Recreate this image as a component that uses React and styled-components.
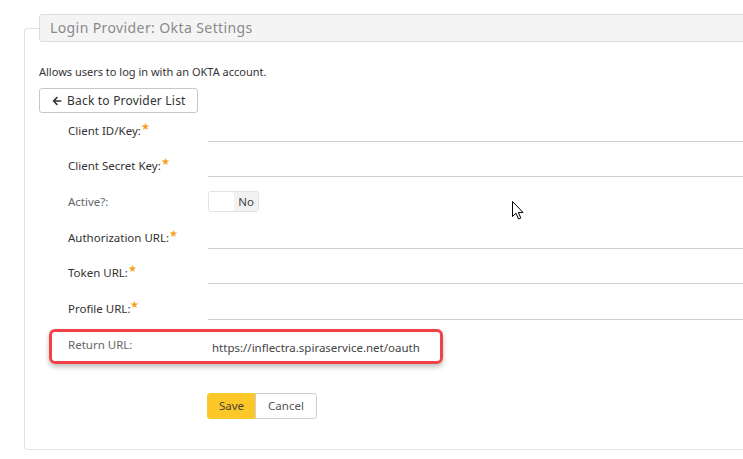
import React from "react";
import styled, { createGlobalStyle } from "styled-components";
import { FaArrowLeft } from "react-icons/fa";

const Global = createGlobalStyle`
  html, body { margin: 0; padding: 0; background: #fff; overflow: hidden; }
  body { font-family: "Noto Sans", "Open Sans", sans-serif; color: #333; }
`;

const Page = styled.div`
  width: 743px;
  height: 459px;
  position: relative;
  overflow: hidden;
  padding: 14px 0 0 24px;
  box-sizing: border-box;
`;

const Fieldset = styled.fieldset`
  width: 760px;
  margin: 0;
  padding: 0 0 30px 14px;
  border: 1px solid #e2e2e2;
  border-radius: 3px;
  box-sizing: border-box;
  min-width: 0;
`;

const Legend = styled.legend`
  width: 720px;
  height: 28px;
  box-sizing: border-box;
  padding: 0 0 0 10px;
  background: #f4f4f4;
  border: 1px solid #dcdcdc;
  border-radius: 3px;
  color: #8a8a8a;
  font-size: 14px;
  line-height: 26px;
  letter-spacing: 0.4px;
`;

const Description = styled.p`
  margin: 22px 0 8px;
  font-size: 11px;
  line-height: 16px;
  color: #333;
`;

const OutlineButton = styled.button`
  display: flex;
  width: max-content;
  align-items: center;
  gap: 5px;
  height: 25px;
  padding: 0 11px 0 12px;
  background: #fff;
  border: 1px solid #c8c8c8;
  border-radius: 3px;
  font-family: inherit;
  font-size: 12px;
  letter-spacing: 0.2px;
  color: #333;
`;

const Form = styled.div`
  display: flex;
  flex-direction: column;
  padding-left: 29px;
  margin-top: -0.5px;
`;

const Row = styled.div`
  position: relative;
  display: grid;
  grid-template-columns: 140px 1fr;
  align-items: center;
  height: 35.6px;
`;

const ReturnRow = styled(Row)`
  margin-top: 1px;
`;

const Label = styled.label`
  font-size: 11.5px;
  color: ${(p) => (p.$required ? "#333" : "#666")};
`;

const Star = styled.sup`
  color: #f5a11c;
  font-size: 10px;
  line-height: 0;
`;

const Input = styled.input`
  height: 22px;
  border: none;
  border-bottom: 1px solid #cfcfcf;
  background: transparent;
  outline: none;
  padding: 0;
`;

const Toggle = styled.div`
  display: flex;
  width: 51px;
  height: 21px;
  box-sizing: border-box;
  border: 1px solid #e2e2e2;
  border-radius: 3px;
  overflow: hidden;
  font-size: 11.5px;
  color: #444;
`;

const ToggleKnob = styled.span`
  width: 25px;
  background: #fff;
`;

const ToggleText = styled.span`
  flex: 1;
  display: flex;
  align-items: center;
  justify-content: center;
  background: #f2f2f2;
`;

const Value = styled.span`
  font-size: 11.5px;
  color: #444;
  padding: 5px 0 0 4px;
`;

const Highlight = styled.span`
  position: absolute;
  left: -19px;
  top: 1.5px;
  width: 394px;
  height: 35px;
  box-sizing: border-box;
  border: 3px solid #f04247;
  border-radius: 6px;
  box-shadow: 0 3px 5px rgba(0, 0, 0, 0.25);
  pointer-events: none;
`;

const Actions = styled.div`
  display: flex;
  margin: 30px 0 0 168px;
`;

const ActionButton = styled.button`
  height: 26px;
  padding: 0 ${(p) => (p.$primary ? "11px" : "12px")};
  font-family: inherit;
  font-size: 11.5px;
  color: ${(p) => (p.$primary ? "#4a4330" : "#555")};
  background: ${(p) => (p.$primary ? "#fcc829" : "#fff")};
  border: 1px solid ${(p) => (p.$primary ? "#fcc829" : "#cfcfcf")};
  border-radius: ${(p) => (p.$primary ? "3px 0 0 3px" : "0 3px 3px 0")};
  margin-left: ${(p) => (p.$primary ? "0" : "-1px")};
`;

const Cursor = styled.svg`
  position: absolute;
  left: 512px;
  top: 201px;
`;

const fields = [
  { label: "Client ID/Key:", required: true },
  { label: "Client Secret Key:", required: true },
  { label: "Active?:", toggle: true },
  { label: "Authorization URL:", required: true },
  { label: "Token URL:", required: true },
  { label: "Profile URL:", required: true },
];

export default function App() {
  return (
    <>
      <Global />
      <Page>
        <Fieldset>
          <Legend>Login Provider: Okta Settings</Legend>
          <Description>Allows users to log in with an OKTA account.</Description>
          <OutlineButton>
            <FaArrowLeft size={10} />
            Back to Provider List
          </OutlineButton>
          <Form>
            {fields.map((f) => (
              <Row key={f.label}>
                <Label $required={f.required}>
                  {f.label}
                  {f.required && <Star>★</Star>}
                </Label>
                {f.toggle ? (
                  <Toggle>
                    <ToggleKnob />
                    <ToggleText>No</ToggleText>
                  </Toggle>
                ) : (
                  <Input type="text" />
                )}
              </Row>
            ))}
            <ReturnRow>
              <Highlight />
              <Label>Return URL:</Label>
              <Value>https://inflectra.spiraservice.net/oauth</Value>
            </ReturnRow>
          </Form>
          <Actions>
            <ActionButton $primary>Save</ActionButton>
            <ActionButton>Cancel</ActionButton>
          </Actions>
        </Fieldset>
        <Cursor width="13" height="19" viewBox="0 0 13 19">
          <path
            d="M0.5 0.5 L0.5 15.5 L4 12.2 L6.6 18 L8.8 17 L6.3 11.4 L11 11.4 Z"
            fill="#fff"
            stroke="#000"
            strokeWidth="1"
            strokeLinejoin="miter"
          />
        </Cursor>
      </Page>
    </>
  );
}
